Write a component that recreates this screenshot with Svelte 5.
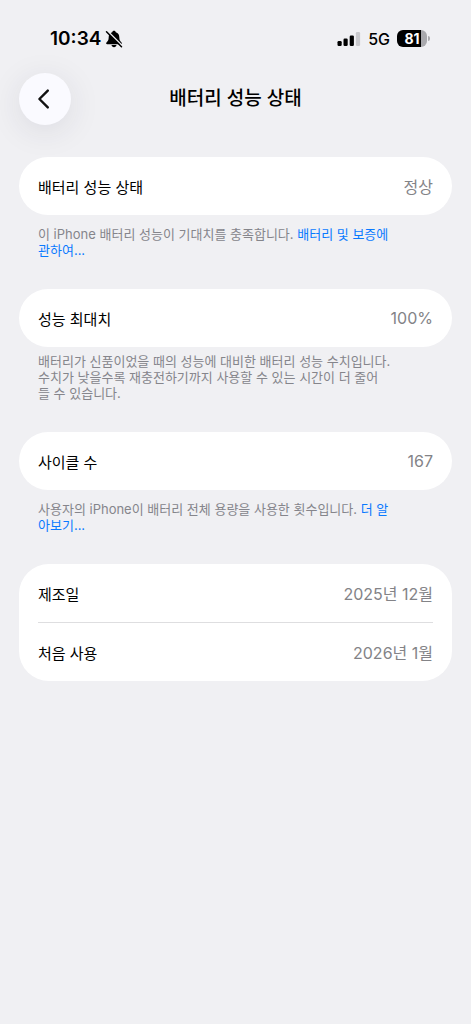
<script>
  const sections = [
    {
      rows: [{ label: '배터리 성능 상태', value: '정상' }],
      note: ['이 iPhone 배터리 성능이 기대치를 충족합니다. '],
      link: ['배터리 및 보증에', '관하여...']
    },
    {
      rows: [{ label: '성능 최대치', value: '100%' }],
      note: [
        '배터리가 신품이었을 때의 성능에 대비한 배터리 성능 수치입니다.',
        '수치가 낮을수록 재충전하기까지 사용할 수 있는 시간이 더 줄어',
        '들 수 있습니다.'
      ]
    },
    {
      rows: [{ label: '사이클 수', value: '167' }],
      note: ['사용자의 iPhone이 배터리 전체 용량을 사용한 횟수입니다. '],
      link: ['더 알', '아보기...']
    },
    {
      rows: [
        { label: '제조일', value: '2025년 12월' },
        { label: '처음 사용', value: '2026년 1월' }
      ]
    }
  ]

  const goBack = () => history.back()
</script>

<div class="screen">
  <div class="status">
    <div class="clock">
      <span class="time">10:34</span>
      <svg width="18" height="18" viewBox="0 0 18 18" aria-hidden="true">
        <path d="M9 .8c-1 0-1.700.7-1.800 1.500C4.900 3 3.700 4.900 3.700 7.200c0 3-1 4-2.200 5.300-.7.800-.3 1.700.700 1.700h13.600c1 0 1.400-.9.700-1.700-1.200-1.300-2.200-2.300-2.200-5.300 0-2.300-1.200-4.200-3.500-4.900C10.700 1.500 10 .8 9 .8z" />
        <path d="M6.500 15h5c-.2 1.400-1.200 2.200-2.500 2.200S6.700 16.400 6.500 15z" />
        <path d="M2.800 1.200L17.300 15.700" stroke="#f0f0f3" stroke-width="1.600" />
        <path d="M1.500 1.800L16.500 16.800" stroke="#000" stroke-width="1.500" stroke-linecap="round" />
      </svg>
    </div>
    <div class="signals">
      <svg width="24" height="16" viewBox="0 0 24 16" aria-hidden="true">
        <rect x="0.500" y="10" width="4.200" height="5" rx="1.200" />
        <rect x="6.500" y="7.500" width="4.200" height="7.500" rx="1.200" />
        <rect x="12.700" y="4.500" width="4.200" height="10.500" rx="1.200" />
        <rect x="18.900" y="1" width="4.200" height="14" rx="1.200" fill="#c9c9cd" />
      </svg>
      <span class="network">5G</span>
      <span class="battery"><span class="level">81</span></span>
    </div>
  </div>

  <header>
    <button class="back" aria-label="뒤로" on:click={goBack}>
      <svg width="20" height="24" viewBox="0 0 20 24" aria-hidden="true">
        <path d="M12.800 3.600L4.400 12l8.400 8.400" fill="none" stroke="#111" stroke-width="2.400" stroke-linecap="round" stroke-linejoin="round" />
      </svg>
    </button>
    <h1>배터리 성능 상태</h1>
  </header>

  <main>
    {#each sections as section}
      <section>
        <dl class="card">
          {#each section.rows as row}
            <div class="row">
              <dt>{row.label}</dt>
              <dd>{row.value}</dd>
            </div>
          {/each}
        </dl>
        {#if section.note}
          <p class="note" class:linked={section.link}>
            {#each section.note as line, i}{#if i}<br />{/if}{line}{/each}
            {#if section.link}
              <a href="#more">{#each section.link as line, i}{#if i}<br />{/if}{line}{/each}</a>
            {/if}
          </p>
        {/if}
      </section>
    {/each}
  </main>
</div>

<style>
  :global(body) {
    background: #f0f0f3;
  }

  .screen {
    font-family: Inter, 'Noto Sans CJK KR', sans-serif;
    color: #000;
    padding: 24px 19px 32px;
  }

  .status {
    display: flex;
    justify-content: space-between;
    align-items: center;
    height: 29px;
    padding: 0 25px 0 31px;
  }

  .clock,
  .signals {
    display: flex;
    align-items: center;
  }

  .clock {
    gap: 4px;
  }

  .time {
    font-size: 19px;
    font-weight: 600;
  }

  .signals {
    gap: 7px;
  }

  .network {
    font-size: 16px;
    font-weight: 500;
  }

  .battery {
    position: relative;
    width: 30px;
    height: 17px;
    border-radius: 6px;
    background: linear-gradient(to right, #000 81%, #a9a9ad 81%);
    color: #fff;
    text-align: center;
  }

  .battery::after {
    content: '';
    position: absolute;
    right: -3px;
    top: 6px;
    width: 2px;
    height: 5px;
    border-radius: 0 2px 2px 0;
    background: #a9a9ad;
  }

  .level {
    display: block;
    font-size: 14px;
    line-height: 17px;
    font-weight: 700;
  }

  header {
    display: grid;
    grid-template-columns: 52px 1fr 52px;
    align-items: center;
    margin-top: 20px;
  }

  .back {
    display: flex;
    align-items: center;
    justify-content: center;
    width: 52px;
    height: 52px;
    padding: 0;
    border: 0;
    border-radius: 50%;
    background: #fafaff;
    box-shadow: 0 6px 32px rgba(40, 40, 70, 0.1);
    cursor: pointer;
  }

  h1 {
    margin: 0;
    font-size: 19px;
    line-height: 28px;
    font-weight: 500;
    text-align: center;
  }

  main {
    display: flex;
    flex-direction: column;
    gap: 31px;
    margin-top: 32px;
  }

  .card {
    margin: 0;
    padding: 0 19px;
    border-radius: 30px;
    background: #fff;
  }

  .row {
    display: flex;
    align-items: center;
    justify-content: space-between;
    height: 58px;
    font-size: 16px;
  }

  .row + .row {
    border-top: 1px solid #dedee0;
  }

  dt {
    font-size: 15px;
  }

  dd {
    margin: 0;
    color: #838387;
  }

  .note {
    margin: 0;
    padding: 6px 19px 0;
    font-size: 13px;
    line-height: 16px;
    color: #85858b;
  }

  .linked {
    padding-top: 11px;
  }

  a {
    color: #0a7aff;
    text-decoration: none;
  }
</style>
